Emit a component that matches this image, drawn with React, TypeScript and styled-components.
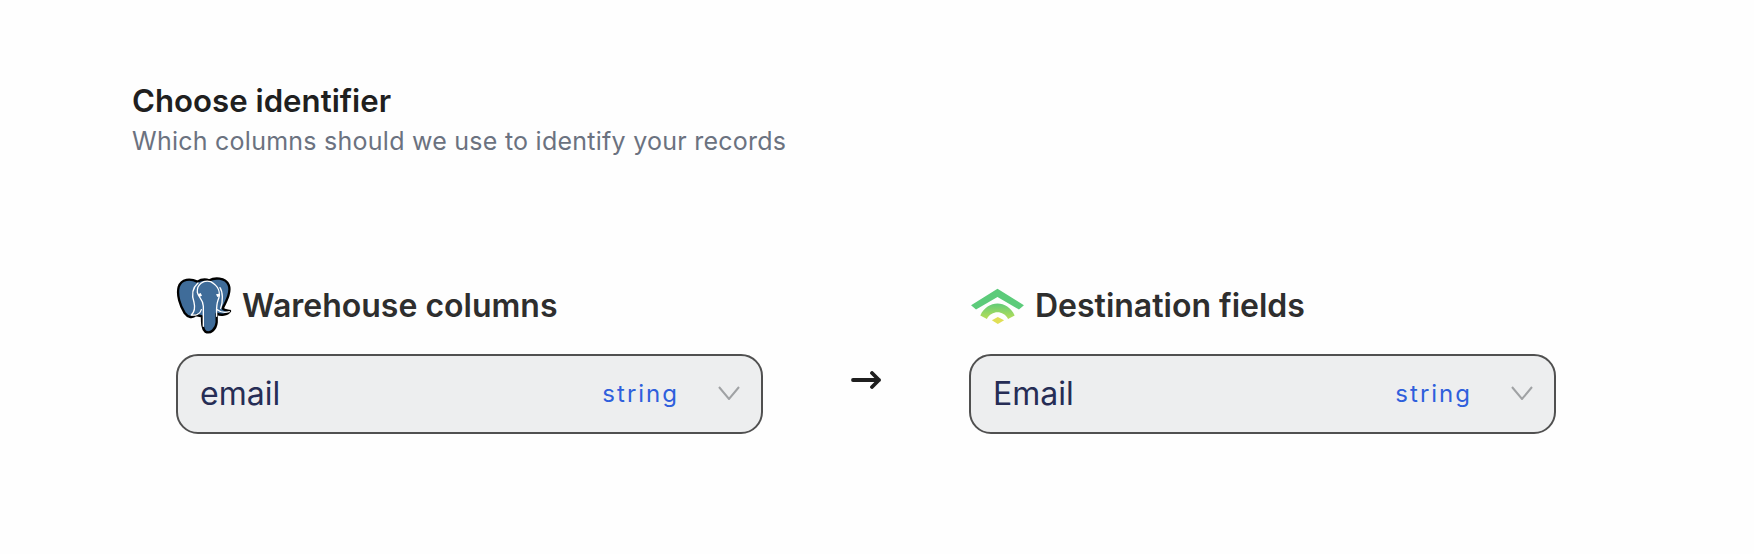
import styled, { createGlobalStyle } from "styled-components";

const GlobalStyle = createGlobalStyle`
  html, body {
    margin: 0;
    padding: 0;
    background: #fefefe;
    font-family: Inter, "Liberation Sans", sans-serif;
  }
`;

const Page = styled.div`
  width: 1754px;
  height: 554px;
  box-sizing: border-box;
  padding: 82px 0 0 132px;
  overflow: hidden;
`;

const Title = styled.h2`
  margin: 0;
  font-size: 31.2px;
  line-height: 38px;
  font-weight: 600;
  color: #1f1f1f;
`;

const Subtitle = styled.p`
  margin: 4px 0 0;
  font-size: 25px;
  line-height: 35px;
  font-weight: 400;
  letter-spacing: 0.25px;
  color: #6b7280;
`;

const Mapping = styled.div`
  display: flex;
  align-items: flex-start;
  margin: 117px 0 0 44px;
`;

const Column = styled.div`
  display: flex;
  flex-direction: column;
  width: 587px;
`;

const Header = styled.div`
  display: flex;
  align-items: center;
  height: 60px;
  margin-bottom: 18px;
  gap: 10px;
`;

const HeaderLabel = styled.span`
  font-size: 32px;
  line-height: 60px;
  height: 60px;
  font-weight: 600;
  color: #2e2e2e;
`;

const Select = styled.div`
  display: flex;
  align-items: center;
  box-sizing: border-box;
  height: 80px;
  padding: 0 12px 0 22px;
  background: #edeeef;
  border: 2px solid #505050;
  border-radius: 22px;
`;

const SelectValue = styled.span`
  flex: 1;
  font-size: 32px;
  line-height: 38px;
  color: #262d55;
`;

const TypeTag = styled.span`
  font-size: 24px;
  line-height: 30px;
  letter-spacing: 2px;
  color: #2f5fdc;
  margin-right: 39px;
`;

const Chevron = styled.svg`
  width: 22px;
  height: 14px;
  margin: 0 9px 2px 0;
  fill: none;
  stroke: #a0a2a4;
  stroke-width: 2;
`;

const ArrowSlot = styled.div`
  display: flex;
  justify-content: center;
  width: 206px;
  padding-top: 95px;
`;

const Arrow = styled.svg`
  width: 30px;
  height: 18px;
  fill: none;
  stroke: #1f1f1f;
  stroke-width: 3.8;
  stroke-linecap: round;
  stroke-linejoin: round;
`;

const PostgresIcon = () => (
  <svg width="56" height="58" viewBox="46 52 168 174">
    <path
      d="M110 66 C90 56 62 56 54 82 C48 106 58 138 72 160 C82 174 96 176 106 166 L124 170 C124 190 124 206 134 216 C150 224 166 208 168 188 L168 162 C180 168 200 166 208 154 C200 152 190 152 186 146 C198 122 212 96 204 76 C194 52 160 54 146 62 C134 58 120 60 110 66 Z"
      fill="#3f6c99"
      stroke="#000"
      strokeWidth="7"
      strokeLinejoin="round"
    />
    <path
      d="M112 70 C96 84 92 104 100 128 C104 144 102 156 92 166 M150 66 C128 60 108 74 110 98 C114 116 128 118 128 140 L128 200 M150 66 C172 78 182 98 172 122 C166 138 168 150 168 170 M178 84 C186 96 188 124 180 146 M92 166 C104 168 118 164 122 150 M170 150 C180 158 194 160 206 156"
      fill="none"
      stroke="#fff"
      strokeWidth="4"
      strokeLinecap="round"
    />
    <path d="M112 104 L120 100 L124 108 L116 112 Z M166 104 L176 102 L178 110 L170 112 Z" fill="#fff" />
  </svg>
);

const SignalIcon = () => (
  <svg width="56" height="38" viewBox="55 50 167 115">
    <defs>
      <linearGradient id="signal" x1="0" y1="0" x2="0" y2="1">
        <stop offset="0" stopColor="#62cc78" />
        <stop offset="1" stopColor="#b8de58" />
      </linearGradient>
    </defs>
    <path d="M140 55 L220 105 L205 118 L140 80 L75 118 L60 105 Z" fill="#5ccb7a" />
    <path d="M88 136 C110 88 170 88 192 136 L172 147 C158 120 122 120 108 147 Z" fill="url(#signal)" />
    <path d="M141 141 L160 151 L141 162 L123 151 Z" fill="#e0df55" />
  </svg>
);

const ColumnBlock = ({
  icon,
  label,
  value,
}: {
  icon: React.ReactNode;
  label: string;
  value: string;
}) => (
  <Column>
    <Header>
      {icon}
      <HeaderLabel>{label}</HeaderLabel>
    </Header>
    <Select>
      <SelectValue>{value}</SelectValue>
      <TypeTag>string</TypeTag>
      <Chevron viewBox="0 0 22 14">
        <path d="M1 1 L11 13 L21 1" />
      </Chevron>
    </Select>
  </Column>
);

export default function App() {
  return (
    <>
      <GlobalStyle />
      <Page>
        <Title>Choose identifier</Title>
        <Subtitle>Which columns should we use to identify your records</Subtitle>
        <Mapping>
          <ColumnBlock icon={<PostgresIcon />} label="Warehouse columns" value="email" />
          <ArrowSlot>
            <Arrow viewBox="0 0 30 18">
              <path d="M2 9 H28 M21 2 L28 9 L21 16" />
            </Arrow>
          </ArrowSlot>
          <ColumnBlock icon={<SignalIcon />} label="Destination fields" value="Email" />
        </Mapping>
      </Page>
    </>
  );
}
